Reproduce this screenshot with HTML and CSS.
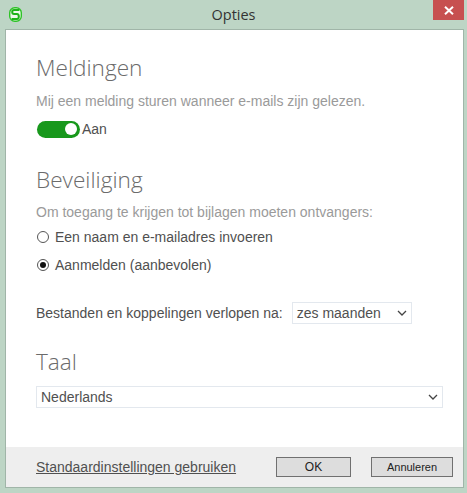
FILE: index.html
```html
<!DOCTYPE html>
<html lang="nl">
<head>
<meta charset="utf-8">
<title>Opties</title>
<link rel="stylesheet" href="styles.css">
</head>
<body>
<div class="window">
  <header class="titlebar">
    <svg class="logo" width="13" height="15" viewBox="0 0 13 15" aria-hidden="true">
      <rect x="0.7" y="0.7" width="11.6" height="13.6" rx="5" fill="#eef8ec" stroke="#2ec327" stroke-width="1.4"/>
      <path d="M10.4 3H5C2.6 3 2.6 7 5 7H8C10.4 7 10.4 12 8 12H2.6" fill="none" stroke="#1fb31a" stroke-width="2"/>
    </svg>
    <h1 class="title">Opties</h1>
    <button class="close" aria-label="Sluiten">
      <svg width="10" height="9" viewBox="0 0 10 9" aria-hidden="true"><path d="M1 .8L9 8.2M9 .8L1 8.2" stroke="#fff" stroke-width="2" fill="none"/></svg>
    </button>
  </header>
  <main class="panel">
    <div class="content">
      <section class="section-notify">
        <h2 class="heading">Meldingen</h2>
        <p class="hint">Mij een melding sturen wanneer e-mails zijn gelezen.</p>
        <div class="toggle-row">
          <span class="toggle"><span class="knob"></span></span>
          <span class="label">Aan</span>
        </div>
      </section>
      <section class="section-security">
        <h2 class="heading">Beveiliging</h2>
        <p class="hint">Om toegang te krijgen tot bijlagen moeten ontvangers:</p>
        <div class="radio-row"><span class="radio"></span><span class="label">Een naam en e-mailadres invoeren</span></div>
        <div class="radio-row second"><span class="radio checked"></span><span class="label">Aanmelden (aanbevolen)</span></div>
        <div class="expiry-row">
          <span class="label">Bestanden en koppelingen verlopen na:</span>
          <div class="select select-short"><span>zes maanden</span>
            <svg class="chev" width="10" height="6" viewBox="0 0 10 6" aria-hidden="true"><path d="M1 1L5 5L9 1" fill="none" stroke="#444" stroke-width="1.3"/></svg>
          </div>
        </div>
      </section>
      <section class="section-language">
        <h2 class="heading">Taal</h2>
        <div class="select select-wide"><span>Nederlands</span>
          <svg class="chev" width="10" height="6" viewBox="0 0 10 6" aria-hidden="true"><path d="M1 1L5 5L9 1" fill="none" stroke="#444" stroke-width="1.3"/></svg>
        </div>
      </section>
    </div>
    <footer class="footer">
      <a class="reset" href="#">Standaardinstellingen gebruiken</a>
      <div class="actions">
        <button class="btn btn-ok">OK</button>
        <button class="btn btn-cancel">Annuleren</button>
      </div>
    </footer>
  </main>
</div>
</body>
</html>
```
FILE: styles.css
```css
* { box-sizing: border-box; }
html, body { margin: 0; height: 100%; }
body {
  background: #bdd5c5;
  font-family: "Liberation Sans", Arial, sans-serif;
  font-size: 14px;
  color: #505050;
  overflow: hidden;
}
.window { width: 467px; height: 493px; display: flex; flex-direction: column; padding: 0 3px 5px 5px; }
.titlebar { height: 29px; flex: none; display: flex; align-items: flex-start; position: relative; margin-left: -5px; margin-right: -3px; }
.logo { position: absolute; left: 9px; top: 7px; }
.title { margin: 0; width: 100%; text-align: center; font-family: "Open Sans", sans-serif; font-size: 14.5px; font-weight: 400; color: #333; line-height: 20px; padding-top: 5px; height: 29px; }
.close { position: absolute; right: 3px; top: 0; width: 31px; height: 20px; border: 0; padding: 0; background: #c75050; display: flex; align-items: center; justify-content: center; }
.panel { flex: 1; background: #fff; border: 1px solid #a0b5a8; display: flex; flex-direction: column; }
.content { flex: 1; padding: 22px 20px 0 30px; }
.heading { margin: 0; font-family: "Open Sans", sans-serif; font-weight: 300; font-size: 22.6px; line-height: 32px; color: #6b6b6b; }
.hint { margin: 9px 0 0; line-height: 16px; color: #9a9a9a; }
.toggle-row { display: flex; align-items: center; margin-top: 11px; height: 18px; gap: 2px; }
.toggle { width: 43px; height: 17px; margin-left: 1px; border-radius: 9px; background: #18981c; display: flex; align-items: center; justify-content: flex-end; padding-right: 3px; }
.knob { width: 12px; height: 12px; border-radius: 50%; background: #fff; }
.section-security { margin-top: 26px; }
.section-security .hint { margin-top: 8px; }
.radio-row { display: flex; align-items: center; height: 16px; margin-top: 9px; gap: 6px; }
.radio-row.second { margin-top: 12px; }
.radio { width: 12px; height: 12px; margin-left: 1px; border-radius: 50%; border: 1px solid #555; background: #fff; display: flex; align-items: center; justify-content: center; flex: none; }
.radio.checked::after { content: ""; width: 6px; height: 6px; border-radius: 50%; background: #111; }
.expiry-row { display: flex; align-items: center; margin-top: 29px; gap: 9px; }
.select { height: 22px; border: 1px solid #e3e8ee; background: #fff; display: flex; align-items: center; justify-content: space-between; padding: 0 4px; }
.select-short { width: 120px; }
.select-wide { width: 407px; margin-top: 8px; }
.section-language { margin-top: 22px; }
.footer { height: 40px; flex: none; background: #eeeeee; display: flex; align-items: center; justify-content: space-between; padding: 0 10px 0 30px; }
.reset { color: #505050; text-decoration: underline; }
.actions { display: flex; gap: 20px; }
.btn { height: 20px; border: 1px solid #707070; background: #dddddd; color: #222; font-family: "Liberation Sans", Arial, sans-serif; font-size: 11px; padding: 0; }
.btn-ok { width: 75px; font-size: 12px; }
.btn-cancel { width: 82px; }
```
